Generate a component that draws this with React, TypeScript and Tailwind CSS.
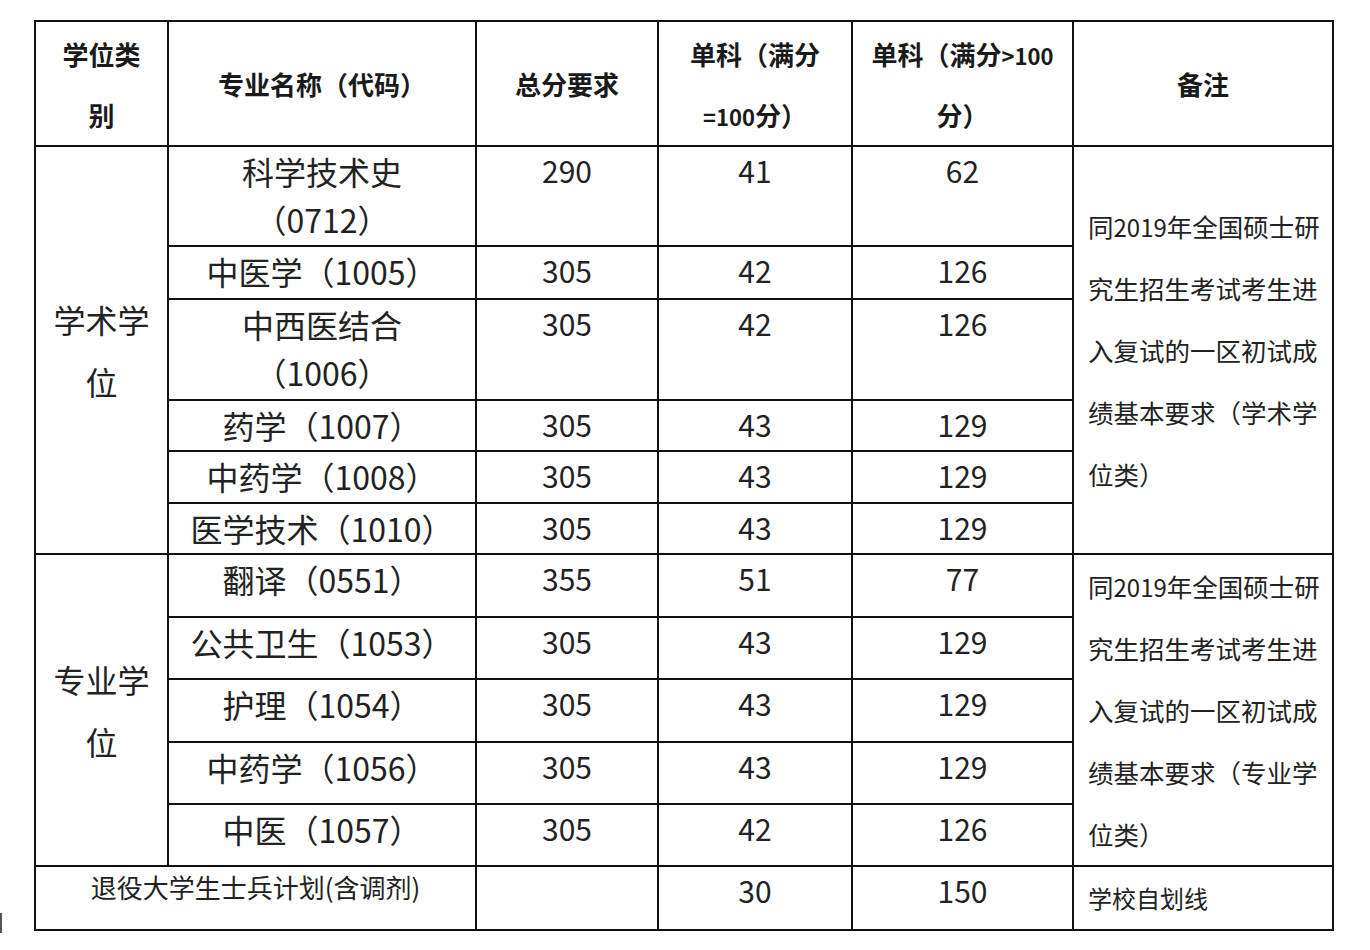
import React from "react";

type Row = { name: string[]; total: string; a: string; b: string; h: number };

const g1: Row[] = [
  { name: ["科学技术史", "（0712）"], total: "290", a: "41", b: "62", h: 100 },
  { name: ["中医学（1005）"], total: "305", a: "42", b: "126", h: 53 },
  { name: ["中西医结合", "（1006）"], total: "305", a: "42", b: "126", h: 101 },
  { name: ["药学（1007）"], total: "305", a: "43", b: "129", h: 51 },
  { name: ["中药学（1008）"], total: "305", a: "43", b: "129", h: 52 },
  { name: ["医学技术（1010）"], total: "305", a: "43", b: "129", h: 51 },
];

const g2: Row[] = [
  { name: ["翻译（0551）"], total: "355", a: "51", b: "77", h: 63 },
  { name: ["公共卫生（1053）"], total: "305", a: "43", b: "129", h: 62 },
  { name: ["护理（1054）"], total: "305", a: "43", b: "129", h: 63 },
  { name: ["中药学（1056）"], total: "305", a: "43", b: "129", h: 62 },
  { name: ["中医（1057）"], total: "305", a: "42", b: "126", h: 62 },
];

const cell = "border-2 border-[#111] p-0";
const data = cell + " align-top text-center text-[30px] leading-[47px] text-[#222]";
const nameCell = cell + " align-top text-center text-[32px] leading-[48px] text-[#222]";
const head = cell + " align-middle text-center font-bold text-[26px] leading-[61px] text-[#1a1a1a]";
const group = cell + " align-middle text-center text-[32px] leading-[62px] text-[#222]";
const remark = cell + " align-middle text-left pl-[14px] text-[25.5px] leading-[62px] text-[#222]";

function Remark({ kind }: { kind: string }) {
  return (
    <>
      <div className="whitespace-nowrap">
        同<span className="text-[24px] leading-none">2019</span>年全国硕士研
      </div>
      <div className="whitespace-nowrap">究生招生考试考生进</div>
      <div className="whitespace-nowrap">入复试的一区初试成</div>
      <div className="whitespace-nowrap">绩基本要求（{kind}</div>
      <div className="whitespace-nowrap">位类）</div>
    </>
  );
}

function Rows({ rows, label, kind }: { rows: Row[]; label: string[]; kind: string }) {
  return (
    <>
      {rows.map((r, i) => (
        <tr key={i} style={{ height: r.h }}>
          {i === 0 && (
            <td rowSpan={rows.length} className={group}>
              {label.map((l, j) => (
                <div key={j}>{l}</div>
              ))}
            </td>
          )}
          <td className={nameCell}>
            {r.name.map((n, j) => (
              <div key={j} className="whitespace-nowrap">
                {n}
              </div>
            ))}
          </td>
          <td className={data}>{r.total}</td>
          <td className={data}>{r.a}</td>
          <td className={data}>{r.b}</td>
          {i === 0 && (
            <td rowSpan={rows.length} className={remark}>
              <Remark kind={kind} />
            </td>
          )}
        </tr>
      ))}
    </>
  );
}

export default function App() {
  return (
    <div
      className="relative w-[1370px] h-[950px] bg-white pl-[34px] pt-[20px]"
      style={{ fontFamily: '"Noto Sans CJK SC", "Noto Sans", sans-serif' }}
    >
      <table className="table-fixed border-collapse w-[1298px]">
        <colgroup>
          <col className="w-[133px]" />
          <col className="w-[308px]" />
          <col className="w-[182px]" />
          <col className="w-[194px]" />
          <col className="w-[221px]" />
          <col className="w-[260px]" />
        </colgroup>
        <tbody>
          <tr className="h-[125px]">
            <td className={head}>
              <div>学位类</div>
              <div>别</div>
            </td>
            <td className={head}>专业名称（代码）</td>
            <td className={head}>总分要求</td>
            <td className={head}>
              <div className="whitespace-nowrap">单科（满分</div>
              <div className="whitespace-nowrap">
                <span className="text-[22px] font-semibold leading-none">=100</span>分）
              </div>
            </td>
            <td className={head}>
              <div className="whitespace-nowrap">
                单科（满分<span className="text-[22px] font-semibold leading-none">&gt;100</span>
              </div>
              <div className="whitespace-nowrap">分）</div>
            </td>
            <td className={head}>备注</td>
          </tr>
          <Rows rows={g1} label={["学术学", "位"]} kind="学术学" />
          <Rows rows={g2} label={["专业学", "位"]} kind="专业学" />
          <tr className="h-[64px]">
            <td colSpan={2} className={cell + " align-top text-center text-[26px] leading-[40px] text-[#222]"}>
              退役大学生士兵计划(含调剂)
            </td>
            <td className={data}></td>
            <td className={data}>30</td>
            <td className={data}>150</td>
            <td className={cell + " align-top text-left pl-[14px] pt-[2px] text-[24px] leading-[58px] text-[#222]"}>
              学校自划线
            </td>
          </tr>
        </tbody>
      </table>
      <div className="absolute left-0 top-[913px] w-[2px] h-[20px] bg-[#555]" />
    </div>
  );
}
